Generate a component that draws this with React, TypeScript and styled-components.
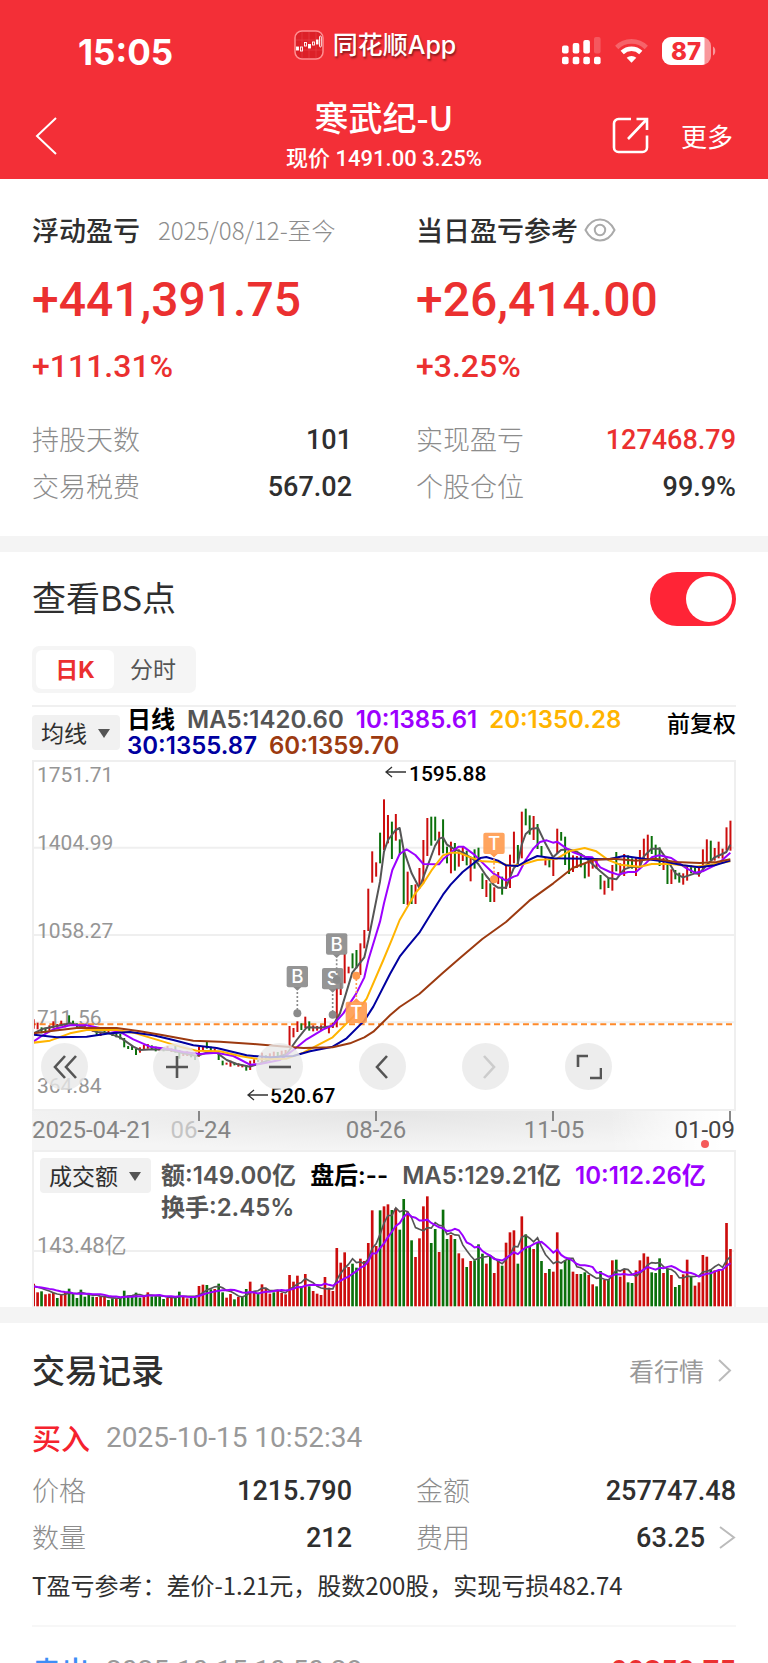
import React, { useState } from "react";
import styled, { createGlobalStyle } from "styled-components";

const CJK = `"Noto Sans CJK SC", sans-serif`;
const NUM = `Roboto, "Noto Sans CJK SC", sans-serif`;
const UI = `Inter, "Noto Sans CJK SC", sans-serif`;

const RED = "#eb3030";
const INK = "#2f2f2f";
const MUTED = "#999";

const GlobalStyle = createGlobalStyle`
  *, *::before, *::after { box-sizing: border-box; }
  body { margin: 0; background: #fff; font-family: ${CJK}; color: ${INK}; }
  button, select, input { font: inherit; color: inherit; }
  button { border: 0; padding: 0; background: none; cursor: pointer; }
  h1, h2, p, dl, dd, dt { margin: 0; font-weight: inherit; }
  svg { display: block; }
`;

const Screen = styled.div`
  height: 100vh;
  overflow: hidden;
  background: #fff;
`;

/* ---------- header ---------- */

const Header = styled.header`
  background: #f32f37;
  color: #fff;
`;

const StatusBar = styled.div`
  display: grid;
  grid-template-columns: 1fr auto 1fr;
  align-items: center;
  height: 88px;
  padding-top: 14px;
`;

const Clock = styled.span`
  padding: 2px 0 0 78px;
  font: 700 35px/40px ${UI};
`;

const AppTag = styled.span`
  display: flex;
  align-items: center;
  gap: 9px;
  padding: 0 18px 12px 0;
  font: 500 25px/32px ${UI};
  text-shadow: 1px 2px 2px rgba(0, 0, 0, 0.45);
`;

const StatusIcons = styled.div`
  display: flex;
  justify-content: flex-end;
  align-items: center;
  gap: 14px;
  padding-right: 52px;
`;

const NavBar = styled.nav`
  display: grid;
  grid-template-columns: 1fr auto 1fr;
  align-items: center;
  height: 91px;
  padding: 4px 35px 0;
`;

const NavActions = styled.div`
  display: flex;
  justify-content: flex-end;
  align-items: center;
  gap: 32px;
  font-size: 26px;
  line-height: 40px;
`;

const TitleStack = styled.div`
  text-align: center;
  align-self: start;
  padding-top: 3px;
`;

const StockName = styled.h1`
  font-size: 34px;
  font-weight: 500;
  line-height: 44px;
`;

const StockPrice = styled.p`
  margin-top: 4px;
  font: 500 22px/32px ${NUM};
`;

/* ---------- shared blocks ---------- */

const Section = styled.section<{ $top: number; $bottom?: number }>`
  padding: ${(p) => p.$top}px 32px ${(p) => p.$bottom ?? 0}px;
`;

const Band = styled.div`
  height: 16px;
  background: #f4f4f4;
`;

const TwoColumns = styled.div`
  display: grid;
  grid-template-columns: 1fr 1fr;
  column-gap: 64px;
`;

const StatList = styled.dl<{ $gap?: number }>`
  margin-top: ${(p) => p.$gap ?? 0}px;
`;

const StatRow = styled.div`
  display: flex;
  align-items: center;
  justify-content: space-between;
  height: 47px;
`;

const StatLabel = styled.dt`
  padding-bottom: 3px;
  font-size: 27px;
  font-weight: 300;
  color: #8c8c8c;
`;

const StatValue = styled.dd<{ $red?: boolean }>`
  display: flex;
  align-items: center;
  gap: 14px;
  font: 500 27px/40px ${NUM};
  color: ${(p) => (p.$red ? RED : INK)};
`;

const BlockHead = styled.div`
  display: flex;
  align-items: center;
  gap: 6px;
  height: 40px;
  padding-bottom: 3px;
  font-size: 27px;
  font-weight: 500;
  white-space: nowrap;
`;

const Since = styled.span`
  margin-left: 12px;
  font-size: 24px;
  font-weight: 300;
  color: #8c8c8c;
`;

const BigNumber = styled.p`
  margin-top: 21px;
  font: 500 48px/56px ${NUM};
  color: ${RED};
`;

const Percent = styled.p`
  margin-top: 18px;
  font: 500 32px/40px ${NUM};
  color: ${RED};
`;

const SectionHead = styled.div<{ $height: number }>`
  display: flex;
  align-items: center;
  justify-content: space-between;
  height: ${(p) => p.$height}px;
`;

const SectionTitle = styled.h2<{ $bold?: boolean }>`
  padding-bottom: 4px;
  font-size: ${(p) => (p.$bold ? 33 : 34)}px;
  line-height: 44px;
  font-weight: ${(p) => (p.$bold ? 500 : 400)};
`;

/* ---------- controls ---------- */

const SwitchInput = styled.input`
  appearance: none;
  display: flex;
  align-items: center;
  justify-content: flex-start;
  width: 86px;
  height: 54px;
  margin: 0;
  padding: 4px;
  border-radius: 27px;
  background: #d8d8d8;
  cursor: pointer;
  &::before {
    content: "";
    width: 46px;
    height: 46px;
    border-radius: 50%;
    background: #fff;
  }
  &:checked {
    justify-content: flex-end;
    background: #ff2436;
  }
`;

const Segments = styled.div`
  display: inline-flex;
  margin-top: 20px;
  padding: 4px;
  border-radius: 7px;
  background: #f5f5f5;
  vertical-align: top;
`;

const Segment = styled.button<{ $active: boolean }>`
  width: 78px;
  height: 39px;
  border-radius: 6px;
  font: ${(p) => (p.$active ? 700 : 400)} 23px/36px ${UI};
  color: ${(p) => (p.$active ? RED : "#555")};
  background: ${(p) => (p.$active ? "#fff" : "transparent")};
`;

const SelectBox = styled.div<{ $width: number }>`
  position: relative;
  flex: none;
  width: ${(p) => p.$width}px;
  height: 35px;
`;

const Select = styled.select`
  appearance: none;
  width: 100%;
  height: 100%;
  padding: 0 0 3px 9px;
  border: 0;
  border-radius: 4px;
  background: #f1f1f1;
  font-size: 23px;
  color: ${INK};
`;

const Caret = styled.span`
  position: absolute;
  top: 14px;
  right: 10px;
  border: solid transparent;
  border-width: 9px 6px 0;
  border-top-color: #555;
  pointer-events: none;
`;

/* ---------- chart ---------- */

const LegendBar = styled.div`
  display: flex;
  gap: 7px;
  height: 55px;
  margin-top: 12px;
  border-top: 2px solid #f0f0f0;
  & > ${SelectBox} { margin-top: 8px; }
`;

const Legend = styled.div<{ $line: number; $gap: number }>`
  display: flex;
  flex-wrap: wrap;
  flex: 1;
  align-content: flex-start;
  column-gap: ${(p) => p.$gap}px;
  height: ${(p) => p.$line * 2}px;
  font: 600 24px/${(p) => p.$line}px ${UI};
  white-space: nowrap;
`;

const LegendItem = styled.span<{ $color: string }>`
  height: 1lh;
  color: ${(p) => p.$color};
`;

const Adjust = styled.span`
  font-size: 23px;
  font-weight: 500;
  line-height: 30px;
  color: #000;
`;

const PlotFrame = styled.div`
  position: relative;
  border: 2px solid #efefef;
  & > svg { width: 100%; height: auto; }
`;

const ChartTools = styled.div`
  position: absolute;
  left: 7px;
  bottom: 19px;
  display: flex;
  gap: 56px;
`;

const ToolButton = styled.button<{ $disabled?: boolean }>`
  display: grid;
  place-items: center;
  width: 47px;
  height: 47px;
  border-radius: 50%;
  background: rgba(232, 232, 232, 0.8);
  color: ${(p) => (p.$disabled ? "#ccc" : "#555")};
  &:first-child { margin-right: 9px; }
`;

const DateAxis = styled.div`
  position: relative;
  height: 39px;
  background:
    linear-gradient(to right, transparent 82%, #fff 98%),
    radial-gradient(ellipse 62% 100% at 50% 0, #e4e4e4, transparent),
    #f5f5f5;
  & > svg { width: 100%; height: auto; }
`;

const VolumeFrame = styled.div`
  position: relative;
  border: solid #efefef;
  border-width: 2px 2px 0;
  & > svg { width: 100%; height: auto; }
`;

const VolumeHead = styled.div`
  position: absolute;
  top: 6px;
  left: 6px;
  right: 0;
  display: flex;
  gap: 10px;
  & > ${Legend} { padding-top: 2px; }
`;

/* ---------- trades ---------- */

const MoreLink = styled.a`
  display: flex;
  align-items: center;
  gap: 14px;
  padding: 0 4px 2px 0;
  font-size: 25px;
  line-height: 36px;
  color: ${MUTED};
  text-decoration: none;
`;

const TradeHead = styled.div<{ $gap: number }>`
  display: flex;
  align-items: center;
  height: 40px;
  margin-top: ${(p) => p.$gap}px;
`;

const Side = styled.span<{ $sell?: boolean }>`
  padding-bottom: 2px;
  font-size: 29px;
  font-weight: 500;
  line-height: 40px;
  color: ${(p) => (p.$sell ? "#3d8df5" : "#f5222d")};
`;

const TradeTime = styled.time`
  margin-left: 16px;
  font: 400 28px/40px ${NUM};
  color: ${MUTED};
`;

const TradeTotal = styled.strong`
  margin-left: auto;
  font: 700 29px/40px ${NUM};
  color: ${RED};
`;

const TradeGrid = styled(TwoColumns)`
  margin-top: 9px;
`;

const Note = styled.p`
  margin-top: 8px;
  padding-bottom: 24px;
  border-bottom: 2px solid #f7f7f7;
  font-size: 24px;
  line-height: 32px;
`;

/* ---------- data ---------- */

// One candle per trading day: colour, high and low in plot units (3 per pixel).
const CANDLES = `R808,836 R818,838 G832,850 G833,850 R826,842 R814,835 R822,835 R812,826 R822,832 G796,822
G812,826 G820,832 G826,836 R824,836 G830,842 R830,845 G842,858 R848,858 G838,850 R842,850
G848,858 G850,862 G852,868 G864,892 G888,897 G888,900 G896,915 R892,908 R885,900 R882,896
G886,898 G890,904 R892,902 G892,904 R888,902 R895,906 G888,908 G900,926 R908,918 R904,918
G912,922 G918,930 R890,920 R888,902 G876,896 G890,903 R896,908 G908,930 G932,946 R938,944
R932,950 G938,946 R940,950 R944,952 G946,962 R932,960 R928,940 G924,936 R908,938 G916,930
R910,925 R905,922 G906,920 R902,918 R900,916 R828,890 R834,862 R814,846 G820,840 R800,834
G814,842 R826,844 R828,842 R826,842 R804,834 R830,850 R818,834 R714,832 R698,735 R612,700
R650,670 G610,655 G600,655 R580,675 R540,595 R416,543 R304,398 R337,380 G248,340 R148,300
R195,280 G215,327 R192,272 G268,315 G298,462 R365,465 G405,462 R403,462 R354,415 R270,400
R204,318 G200,287 G200,272 R245,316 G208,310 G290,340 R275,370 G279,362 R298,350 R288,333
G302,346 R320,394 G298,356 G293,335 G370,417 R390,441 G400,456 R412,456 R366,402 G380,434
R345,417 R314,414 R245,340 G285,346 R185,325 G176,226 G196,254 R198,270 G222,297 G288,318
R322,346 G325,352 R330,378 R236,310 G246,272 G260,345 G300,372 R316,366 R318,354 G310,352
G340,385 R334,380 R326,356 R330,356 G375,418 R392,434 G384,414 R345,422 G306,364 R340,370
R312,378 G316,350 G325,356 R324,378 R300,352 R266,325 R254,330 G258,312 G284,332 G292,348
R324,360 G345,402 R358,402 G360,388 G368,398 R370,404 R348,392 G345,370 G350,372 R350,380
R298,362 R268,335 G272,330 R294,332 R275,325 R296,326 R232,302 R212,302`
  .split(/\s+/)
  .map((c) => {
    const [high, low] = c.slice(1).split(",").map(Number);
    return { up: c[0] === "R", high, low };
  });

// Turnover bars: colour and the top edge, in the same units.
const TURNOVER = `R548 R574 G571 R580 R578 R575 G591 R582 R573 G563 G578 G591 G566 G587 G580 G587 R588 R588 R588 G597
G592 R592 G590 G569 G584 G584 G575 G590 R588 R574 G586 G586 G586 G594 R591 R590 G588 G572 R588 R592
G590 G588 R555 R551 G552 G565 R564 G548 G574 R590 R579 G595 R588 G588 G564 R542 R574 G578 R550 R564
R578 G574 R570 R576 R580 R522 R542 R524 G556 R519 G556 R570 R578 R582 R528 R560 R570 R441 R485 R454
R498 G488 G500 R473 R480 R426 R328 R435 G328 R316 R310 G327 R322 G386 G294 R332 G418 R468 R412 R316
R286 G426 G384 R453 G326 G414 R402 G414 R457 R472 G498 R480 G478 G430 G458 R488 G464 R516 R480 G494
R425 R394 R388 G488 R346 G400 G436 R444 G426 G480 R516 G504 R512 R394 G505 G478 G472 R512 R519 G519
G514 R522 R550 G556 G510 R536 G534 R478 G476 R527 R504 G544 G546 R508 R478 R457 R467 G514 G516 G472
R516 G502 R522 G558 G552 R520 R476 G528 R554 R544 R462 R467 G506 R508 R508 R506 R366 R444`
  .split(/\s+/)
  .map((v) => ({ up: v[0] === "R", top: Number(v.slice(1)) }));

const AVERAGES = [
  {
    color: "#555",
    points:
      "41,850 70,836 100,830 150,820 200,834 230,846 260,848 300,862 340,890 360,900 400,898 450,900 490,910 530,918 560,908 590,908 620,930 650,942 690,950 720,940 760,925 800,912 830,870 860,832 900,833 938,828 960,790 997,668 1033,622 1045,570 1080,395 1092,305 1104,270 1127,240 1139,234 1151,300 1175,370 1198,414 1222,350 1245,288 1258,266 1269,262 1281,284 1304,298 1330,308 1363,330 1375,342 1399,378 1422,405 1434,413 1458,413 1481,355 1493,342 1505,285 1517,252 1535,236 1554,234 1576,280 1599,322 1623,300 1645,298 1670,305 1694,320 1717,342 1741,364 1765,384 1789,388 1812,358 1836,350 1859,352 1871,320 1895,296 1918,296 1942,330 1966,370 1989,382 2025,370 2037,372 2060,345 2084,322 2107,312 2119,306 2131,284",
  },
  {
    color: "#9c00ff",
    points:
      "41,874 65,858 100,838 150,826 200,826 250,836 300,846 340,868 390,890 450,898 490,906 540,912 590,908 640,918 690,944 720,942 780,930 820,900 860,868 910,838 938,826 970,790 1009,730 1033,682 1045,630 1080,515 1092,460 1117,360 1139,312 1160,298 1186,315 1210,342 1257,343 1269,328 1292,308 1316,290 1330,290 1363,314 1387,338 1422,372 1458,392 1481,380 1493,376 1517,330 1540,296 1560,276 1580,271 1599,278 1611,275 1635,292 1658,306 1694,320 1717,322 1741,352 1770,366 1794,374 1824,366 1848,366 1871,346 1895,322 1918,316 1954,324 1978,340 2001,356 2025,368 2048,364 2072,352 2096,340 2131,308",
  },
  {
    color: "#ffb400",
    points:
      "41,878 90,872 150,850 200,840 290,840 340,848 400,866 480,890 530,902 600,904 660,918 720,928 800,926 850,908 938,862 1000,800 1040,746 1090,630 1117,565 1139,510 1151,490 1186,430 1210,400 1234,362 1269,316 1292,308 1316,308 1351,322 1387,334 1434,336 1470,348 1505,344 1552,330 1611,326 1647,304 1694,294 1729,304 1765,330 1800,344 1860,350 1895,342 1954,342 2025,350 2072,344 2131,334",
  },
  {
    color: "#0000a0",
    points:
      "41,854 110,862 200,860 270,850 330,846 400,856 460,870 520,886 590,894 680,916 750,922 820,918 870,904 938,890 980,865 1033,812 1060,770 1110,672 1139,620 1163,590 1198,548 1234,490 1269,434 1292,404 1328,366 1363,338 1381,324 1399,321 1434,332 1458,346 1493,348 1517,334 1552,318 1599,325 1694,326 1765,328 1812,318 1871,326 1930,334 1989,346 2037,352 2084,346 2131,332",
  },
  {
    color: "#9c3a10",
    points:
      "41,850 100,842 170,834 290,834 360,844 430,856 520,872 600,875 700,882 780,889 850,894 938,892 990,880 1033,862 1060,845 1110,796 1139,771 1198,732 1269,668 1320,624 1387,567 1458,516 1528,452 1600,400 1658,354 1720,330 1780,326 1848,332 1906,326 1966,336 2040,339 2090,336 2131,328",
  },
];

const MARKERS = [
  { text: "B", x: 832, y: 680, dot: 790, color: "#8a8a8a" },
  { text: "S", x: 938, y: 686, dot: 794, color: "#8a8a8a" },
  { text: "B", x: 950, y: 582, dot: 690, color: "#8a8a8a" },
  { text: "T", x: 1009, y: 787, dot: 677, color: "#ff9a4d" },
  { text: "T", x: 1422, y: 280, dot: 388, color: "#ff9a4d" },
];

const UP = "#cc0d0d";
const DOWN = "#0b700b";
const dayX = (i: number) => 41 + i * 11.81;

function movingAverage(days: number) {
  return TURNOVER.map((_, i) => {
    let sum = 0;
    for (let k = 0; k < days; k++) sum += i - k < 0 ? 557 : TURNOVER[i - k].top;
    return `${dayX(i)},${sum / days}`;
  }).join(" ");
}

/* ---------- drawings ---------- */

const Chevron = ({ w, h, stroke = 2, left, color = "currentColor" }: { w: number; h: number; stroke?: number; left?: boolean; color?: string }) => (
  <svg width={w} height={h} viewBox={`0 0 ${w} ${h}`} fill="none" stroke={color} strokeWidth={stroke} aria-hidden="true">
    <path d={left ? `M${w - 1} 1L2 ${h / 2}L${w - 1} ${h - 1}` : `M1 1L${w - 2} ${h / 2}L1 ${h - 1}`} />
  </svg>
);

const AppLogo = () => (
  <svg width="30" height="30" viewBox="0 0 30 30" aria-hidden="true">
    <rect x="1" y="1" width="28" height="28" rx="7" fill="#dc2028" stroke="#ff8f92" strokeWidth="1.5" />
    <path d="M8 2v26M15 2v26M22 2v26M2 10h26M2 20h26" stroke="#e9454b" strokeWidth="0.6" />
    <g stroke="#fff" strokeWidth="0.9">
      <rect x="2.5" y="17" width="2" height="3" fill="#fff" />
      <rect x="6.5" y="17" width="2" height="4" fill="none" />
      <rect x="10.5" y="12.5" width="2" height="3.5" fill="none" />
      <rect x="14.5" y="14.5" width="2" height="3.5" fill="#fff" />
      <rect x="18.5" y="12" width="2" height="3" fill="none" />
      <rect x="22.5" y="10" width="1.5" height="4" fill="#fff" />
      <rect x="25.5" y="6" width="1.8" height="11" rx="0.9" fill="none" />
    </g>
  </svg>
);

const Signal = () => (
  <svg width="39" height="28" viewBox="0 0 39 28" fill="#fff" aria-hidden="true">
    <rect x="0" y="8.5" width="6.6" height="8" rx="2" />
    <rect x="10.7" y="6" width="6.6" height="10.5" rx="2" />
    <rect x="21.3" y="3" width="6.6" height="13.5" rx="2" />
    <rect x="32" y="0" width="6.6" height="16.5" rx="2" opacity="0.2" />
    {[0, 10.7, 21.3, 32].map((x) => (
      <rect key={x} x={x} y="19.7" width="6.6" height="7.5" rx="2" />
    ))}
  </svg>
);

const Wifi = () => (
  <svg width="33" height="26" viewBox="0 0 33 26" fill="none" stroke="#fff" strokeWidth="4.6" aria-hidden="true">
    <path d="M1.7 9.5a21 21 0 0 1 29.6 0" opacity="0.25" />
    <path d="M7.2 14.5a13.4 13.4 0 0 1 18.6 0" />
    <path d="M16.5 24.8l-4.8-5a7 7 0 0 1 9.6 0z" fill="#fff" stroke="none" />
  </svg>
);

const Battery = () => (
  <svg width="54" height="28" viewBox="0 0 54 28" aria-hidden="true">
    <defs>
      <clipPath id="cell">
        <rect width="49" height="28" rx="9" />
      </clipPath>
    </defs>
    <g clipPath="url(#cell)">
      <rect width="49" height="28" fill="#fff" opacity="0.5" />
      <rect width="42.5" height="28" fill="#fff" />
    </g>
    <path d="M51 9.5c3 1 3 8 0 9z" fill="#fff" opacity="0.5" />
    <text x="24" y="22.5" textAnchor="middle" fontFamily="Inter, sans-serif" fontWeight="800" fontSize="24" fill="#f32f37">
      87
    </text>
  </svg>
);

const ShareIcon = () => (
  <svg width="37" height="37" viewBox="0 0 37 37" fill="none" stroke="currentColor" strokeWidth="2.6" aria-hidden="true">
    <path d="M19 2H6.5A4.5 4.5 0 0 0 2 6.5v24A4.5 4.5 0 0 0 6.5 35h24a4.5 4.5 0 0 0 4.5-4.5V18.5" />
    <path d="M24.5 2H35v11M35 2L16 22" />
  </svg>
);

const EyeIcon = () => (
  <svg width="32" height="24" viewBox="0 0 32 24" fill="none" stroke="#aaa" strokeWidth="2" aria-hidden="true">
    <path d="M1.5 12C5 5 10 1.5 16 1.5S27 5 30.5 12C27 19 22 22.5 16 22.5S5 19 1.5 12z" />
    <circle cx="16" cy="12" r="5.2" />
  </svg>
);

const ToolIcon = ({ d }: { d: string }) => (
  <svg width="26" height="26" viewBox="0 0 26 26" fill="none" stroke="currentColor" strokeWidth="2.6" aria-hidden="true">
    <path d={d} />
  </svg>
);

function PricePlot() {
  const labels: [string, number][] = [
    ["1751.71", 20],
    ["1404.99", 88],
    ["1058.27", 176],
    ["711.56", 263],
    ["364.84", 331],
  ];
  return (
    <svg viewBox="0 0 700 347" fontFamily={NUM} fontSize="21" role="img" aria-label="日K线图">
      <g transform="translate(-14 -12) scale(0.33333)" fill="none">
        <path d="M36 293H2150M36 555H2150M36 817H2150" stroke="#efefef" strokeWidth="6" />
      </g>
      <g fill="#959595">
        {labels.map(([t, y]) => (
          <text key={t} x="3" y={y}>
            {t}
          </text>
        ))}
      </g>
      <g transform="translate(-14 -12) scale(0.33333)" fill="none">
        <path d="M30 823H2160" stroke="#ff8a2b" strokeWidth="6" strokeDasharray="18 11" />
        {CANDLES.map((c, i) => (
          <path key={i} d={`M${dayX(i)} ${c.high}V${c.low}`} stroke={c.up ? UP : DOWN} strokeWidth="6" />
        ))}
        {AVERAGES.map((a) => (
          <polyline key={a.color} points={a.points} stroke={a.color} strokeWidth="6" strokeLinejoin="round" />
        ))}
        {MARKERS.map((m) => {
          const dir = m.dot > m.y ? 1 : -1;
          return (
            <g key={`${m.text}${m.x}`}>
              <path d={`M${m.x} ${m.y + dir * 34}V${m.dot}`} stroke={m.color} strokeWidth="5" strokeDasharray="6 6" />
              <circle cx={m.x} cy={m.dot} r="12" fill={m.color} />
              <rect x={m.x - 32} y={m.y - 32} width="64" height="64" rx="6" fill={m.color} fillOpacity="0.9" />
              <path d={`M${m.x - 12} ${m.y + dir * 31}h24l-12 ${dir * 11}z`} fill={m.color} />
              <text x={m.x} y={m.y + 20} textAnchor="middle" fontFamily={UI} fontSize="56" fontWeight="500" fill="#fff">
                {m.text}
              </text>
            </g>
          );
        })}
      </g>
      <g fill="#000" fontWeight="500">
        <text x="375" y="19">
          1595.88
        </text>
        <text x="236" y="341">
          520.67
        </text>
      </g>
      <path d="M372 10H352m6-5l-6 5 6 5M234 333H214m6-5l-6 5 6 5" fill="none" stroke="#333" strokeWidth="1.3" />
    </svg>
  );
}

function AxisLabels() {
  return (
    <svg viewBox="0 0 704 39" fontFamily={NUM} fontSize="24" fill="#858585" aria-hidden="true">
      <path d="M167 0v10M344 0v10M521 0v10M698 0v10" stroke="#888" strokeWidth="2" />
      <text x="0" y="27">2025-04-21</text>
      <text x="199" y="27" textAnchor="end">
        <tspan fill="#c4c4c4">06</tspan>-24
      </text>
      <text x="344" y="27" textAnchor="middle">08-26</text>
      <text x="522" y="27" textAnchor="middle">11-05</text>
      <text x="703" y="27" textAnchor="end" fill="#444">01-09</text>
      <circle cx="673" cy="33" r="4" fill="#f55a5a" />
    </svg>
  );
}

function TurnoverPlot() {
  return (
    <svg viewBox="0 0 700 155" role="img" aria-label="成交额">
      <g transform="translate(-14 -51) scale(0.33333)" fill="none">
        <path d="M36 450H2150" stroke="#efefef" strokeWidth="6" />
        {TURNOVER.map((v, i) => (
          <path key={i} d={`M${dayX(i)} ${v.top}V616`} stroke={v.up ? UP : DOWN} strokeWidth="8" />
        ))}
        <polyline points={movingAverage(5)} stroke="#555" strokeWidth="5" />
        <polyline points={movingAverage(10)} stroke="#9c00ff" strokeWidth="6" />
      </g>
      <text x="3" y="101" fontFamily={NUM} fontSize="22" fill="#959595">
        143.48亿
      </text>
    </svg>
  );
}

/* ---------- page ---------- */

export default function App() {
  const [showPoints, setShowPoints] = useState(true);
  const [mode, setMode] = useState("日K");

  return (
    <Screen>
      <GlobalStyle />
      <Header>
        <StatusBar>
          <Clock>15:05</Clock>
          <AppTag>
            <AppLogo />
            同花顺App
          </AppTag>
          <StatusIcons>
            <Signal />
            <Wifi />
            <Battery />
          </StatusIcons>
        </StatusBar>
        <NavBar>
          <button type="button" aria-label="返回">
            <Chevron w={22} h={38} left />
          </button>
          <TitleStack>
            <StockName>寒武纪-U</StockName>
            <StockPrice>现价 1491.00 3.25%</StockPrice>
          </TitleStack>
          <NavActions>
            <button type="button" aria-label="分享">
              <ShareIcon />
            </button>
            <button type="button">更多</button>
          </NavActions>
        </NavBar>
      </Header>

      <Section $top={32} $bottom={26}>
        <TwoColumns>
          <div>
            <BlockHead>
              浮动盈亏<Since>2025/08/12-至今</Since>
            </BlockHead>
            <BigNumber>+441,391.75</BigNumber>
            <Percent>+111.31%</Percent>
            <StatList $gap={30}>
              <StatRow>
                <StatLabel>持股天数</StatLabel>
                <StatValue>101</StatValue>
              </StatRow>
              <StatRow>
                <StatLabel>交易税费</StatLabel>
                <StatValue>567.02</StatValue>
              </StatRow>
            </StatList>
          </div>
          <div>
            <BlockHead>
              当日盈亏参考
              <button type="button" aria-label="隐藏金额">
                <EyeIcon />
              </button>
            </BlockHead>
            <BigNumber>+26,414.00</BigNumber>
            <Percent>+3.25%</Percent>
            <StatList $gap={30}>
              <StatRow>
                <StatLabel>实现盈亏</StatLabel>
                <StatValue $red>127468.79</StatValue>
              </StatRow>
              <StatRow>
                <StatLabel>个股仓位</StatLabel>
                <StatValue>99.9%</StatValue>
              </StatRow>
            </StatList>
          </div>
        </TwoColumns>
      </Section>

      <Band />

      <Section $top={20}>
        <SectionHead $height={54}>
          <SectionTitle>
            <label htmlFor="bs-points">查看BS点</label>
          </SectionTitle>
          <SwitchInput id="bs-points" type="checkbox" role="switch" checked={showPoints} onChange={(e) => setShowPoints(e.target.checked)} />
        </SectionHead>
        <Segments>
          {["日K", "分时"].map((m) => (
            <Segment key={m} type="button" $active={mode === m} onClick={() => setMode(m)}>
              {m}
            </Segment>
          ))}
        </Segments>

        <LegendBar>
          <SelectBox $width={88}>
            <Select aria-label="主图指标">
              <option>均线</option>
            </Select>
            <Caret />
          </SelectBox>
          <Legend $line={26} $gap={12}>
            <LegendItem $color="#000">日线</LegendItem>
            <LegendItem $color="#555">MA5:1420.60</LegendItem>
            <LegendItem $color="#9c00ff">10:1385.61</LegendItem>
            <LegendItem $color="#ffb400">20:1350.28</LegendItem>
            <LegendItem $color="#0000a0">30:1355.87</LegendItem>
            <LegendItem $color="#9c3a10">60:1359.70</LegendItem>
          </Legend>
          <Adjust>前复权</Adjust>
        </LegendBar>

        <PlotFrame>
          <PricePlot />
          <ChartTools>
            <ToolButton type="button" aria-label="最早">
              <ToolIcon d="M13 2L3 13L13 24M24 2L14 13L24 24" />
            </ToolButton>
            <ToolButton type="button" aria-label="放大">
              <ToolIcon d="M13 2V24M2 13H24" />
            </ToolButton>
            <ToolButton type="button" aria-label="缩小">
              <ToolIcon d="M2 13H24" />
            </ToolButton>
            <ToolButton type="button" aria-label="向左">
              <ToolIcon d="M17 2L7 13L17 24" />
            </ToolButton>
            <ToolButton type="button" aria-label="向右" $disabled>
              <ToolIcon d="M11 2L21 13L11 24" />
            </ToolButton>
            <ToolButton type="button" aria-label="全屏">
              <ToolIcon d="M2 13V2H12M25 14V24H14" />
            </ToolButton>
          </ChartTools>
        </PlotFrame>
        <DateAxis>
          <AxisLabels />
        </DateAxis>
        <VolumeFrame>
          <TurnoverPlot />
          <VolumeHead>
            <SelectBox $width={111}>
              <Select aria-label="副图指标">
                <option>成交额</option>
              </Select>
              <Caret />
            </SelectBox>
            <Legend $line={32} $gap={14}>
              <LegendItem $color="#555">额:149.00亿</LegendItem>
              <LegendItem $color="#000">盘后:--</LegendItem>
              <LegendItem $color="#555">MA5:129.21亿</LegendItem>
              <LegendItem $color="#9c00ff">10:112.26亿</LegendItem>
              <LegendItem $color="#555">换手:2.45%</LegendItem>
            </Legend>
          </VolumeHead>
        </VolumeFrame>
      </Section>

      <Band />

      <Section $top={26}>
        <SectionHead $height={44}>
          <SectionTitle $bold>交易记录</SectionTitle>
          <MoreLink href="#quote">
            看行情
            <Chevron w={14} h={23} color="#bbb" />
          </MoreLink>
        </SectionHead>

        <TradeHead $gap={25}>
          <Side>买入</Side>
          <TradeTime>2025-10-15 10:52:34</TradeTime>
        </TradeHead>
        <TradeGrid>
          <StatList>
            <StatRow>
              <StatLabel>价格</StatLabel>
              <StatValue>1215.790</StatValue>
            </StatRow>
            <StatRow>
              <StatLabel>数量</StatLabel>
              <StatValue>212</StatValue>
            </StatRow>
          </StatList>
          <StatList>
            <StatRow>
              <StatLabel>金额</StatLabel>
              <StatValue>257747.48</StatValue>
            </StatRow>
            <StatRow>
              <StatLabel>费用</StatLabel>
              <StatValue>
                63.25
                <Chevron w={17} h={23} color="#bbb" />
              </StatValue>
            </StatRow>
          </StatList>
        </TradeGrid>
        <Note>T盈亏参考：差价-1.21元，股数200股，实现亏损482.74</Note>

        <TradeHead $gap={24}>
          <Side $sell>卖出</Side>
          <TradeTime>2025-10-15 10:50:28</TradeTime>
          <TradeTotal>99350.75</TradeTotal>
        </TradeHead>
      </Section>
    </Screen>
  );
}
